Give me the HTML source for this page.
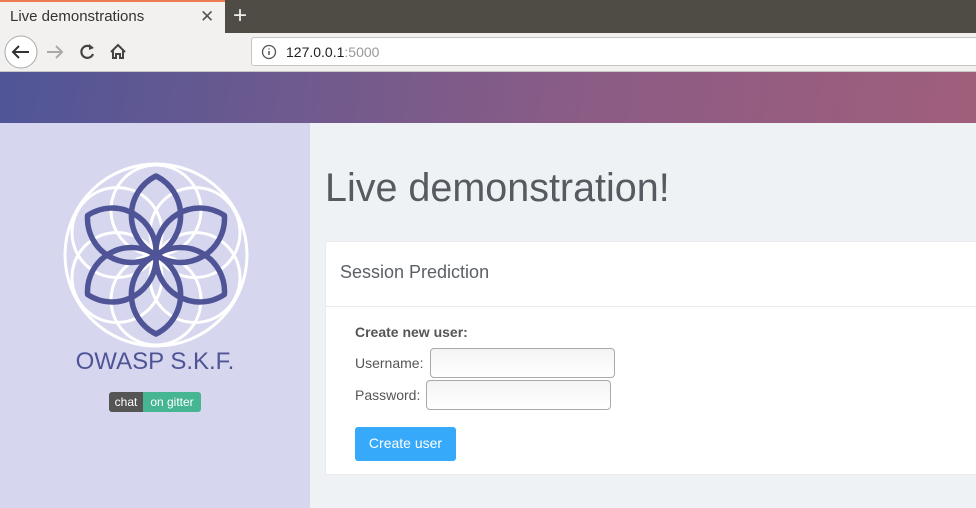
<!DOCTYPE html>
<html><head><meta charset="utf-8"><style>
*{box-sizing:border-box;margin:0;padding:0}
body{width:976px;height:508px;overflow:hidden;font-family:"Liberation Sans",sans-serif;background:#eff2f5;position:relative}
.tabbar{position:absolute;left:0;top:0;width:976px;height:33px;background:#4f4c46}
.tab{position:absolute;left:0;top:0;width:225px;height:33px;background:#f2f1ef;border-top:2px solid #ee7a52}
.tab span{position:absolute;left:10px;top:6px;font-size:15px;color:#333}
.tab .x{left:200px;top:5px;font-size:17px;color:#555}
.plus{position:absolute;left:233px;top:2px;color:#eee;font-size:24px}
.toolbar{position:absolute;left:0;top:33px;width:976px;height:39px;background:#f2f1ef;border-bottom:1px solid #c8c8c8}
.url{position:absolute;left:251px;top:4px;width:730px;height:29px;background:#fff;border:1px solid #c5c5c5;border-radius:3px}
.url span{position:absolute;left:34px;top:6px;font-size:14px;color:#222}
.url i{font-style:normal;color:#999}
.hdr{position:absolute;left:0;top:72px;width:976px;height:51px;background:linear-gradient(100deg,#4f5597 0%,#6e5a8e 30%,#8b5c85 60%,#a05e7b 100%)}
.side{position:absolute;left:0;top:123px;width:310px;height:385px;background:#d6d6ee}
.skf{position:absolute;left:0;top:348px;width:310px;text-align:center;font-size:24px;color:#4f5497}
.badge{position:absolute;left:109px;top:392px;height:20px;font-size:12px;color:#fff;border-radius:3px;overflow:hidden;display:flex;line-height:20px}
.badge b{font-weight:normal;background:#555;width:34px;text-align:center}
.badge em{font-style:normal;background:#46b592;width:58px;text-align:center}
h1{position:absolute;left:325px;top:166px;font-size:39.5px;font-weight:normal;color:#555b60}
.card{position:absolute;left:325px;top:241px;width:660px;height:234px;background:#fff;border-radius:3px;border:1px solid #e8eaed}
.ch{height:65px;border-bottom:1px solid #e8eaec;padding:20px 0 0 14px;font-size:18px;color:#5b6067}
.lbl{position:absolute;font-size:14px;color:#555}
.inp{position:absolute;height:30px;border:1px solid #a9a9a9;border-radius:4px;background:linear-gradient(#f4f4f4,#fff)}
.btn{position:absolute;left:29px;top:185px;width:101px;height:34px;background:#36a9fb;border-radius:3px;color:#fff;font-size:14px;text-align:center;line-height:33px}
</style></head><body>
<div class="tabbar"><div class="tab"><span>Live demonstrations</span><span class="x">✕</span></div><div class="plus">+</div></div>
<div class="toolbar">
<svg width="250" height="39" style="position:absolute;left:0;top:0">
<circle cx="21" cy="19" r="16" fill="#fff" stroke="#aaa"/>
<path d="M29 19H13M19 13l-6 6 6 6" stroke="#333" stroke-width="2" fill="none"/>
<path d="M62 19H47M56 13l6 6-6 6" stroke="#aaa" stroke-width="2" fill="none"/>
<path d="M92 15a6 6 0 1 0 1 6" stroke="#444" stroke-width="2.2" fill="none"/><path d="M89 11l5 4-5 2z" fill="#444"/>
<path d="M111 19l7-7 7 7M113 17v8h3v-4h4v4h3v-8" stroke="#444" stroke-width="2" fill="none"/>
</svg>
<div class="url"><svg width="20" height="20" style="position:absolute;left:8px;top:4px"><circle cx="9" cy="10" r="6.5" fill="none" stroke="#555" stroke-width="1.3"/><path d="M9 9v4M9 6.5v1" stroke="#555" stroke-width="1.5"/></svg><span>127.0.0.1<i>:5000</i></span></div>
</div>
<div class="hdr"></div>
<div class="side">
<svg width="310" height="230" style="position:absolute;left:0;top:0">
<g transform="translate(156,132)" fill="none">
<circle r="91" stroke="#fff" stroke-width="3"/>
<g stroke="#fff" stroke-width="3">
<circle cx="0" cy="-45" r="45"/><circle cx="0" cy="45" r="45"/>
<circle cx="39" cy="-22.5" r="45"/><circle cx="39" cy="22.5" r="45"/>
<circle cx="-39" cy="-22.5" r="45"/><circle cx="-39" cy="22.5" r="45"/>
</g>
<g stroke="#4f5497" stroke-width="5.5" stroke-linejoin="round">
<path id="p" d="M0 0A44 44 0 0 1 0 -79A44 44 0 0 1 0 0Z"/>
<use href="#p" transform="rotate(60)"/><use href="#p" transform="rotate(120)"/>
<use href="#p" transform="rotate(180)"/><use href="#p" transform="rotate(240)"/><use href="#p" transform="rotate(300)"/>
</g></g></svg>
</div>
<div class="skf">OWASP S.K.F.</div>
<div class="badge"><b>chat</b><em>on gitter</em></div>
<h1>Live demonstration!</h1>
<div class="card">
<div class="ch">Session Prediction</div>
<div class="lbl" style="left:29px;top:82px;font-weight:bold">Create new user:</div>
<div class="lbl" style="left:29px;top:113px">Username:</div>
<div class="inp" style="left:104px;top:106px;width:185px"></div>
<div class="lbl" style="left:29px;top:145px">Password:</div>
<div class="inp" style="left:100px;top:138px;width:185px"></div>
<div class="btn">Create user</div>
</div>
</body></html>
